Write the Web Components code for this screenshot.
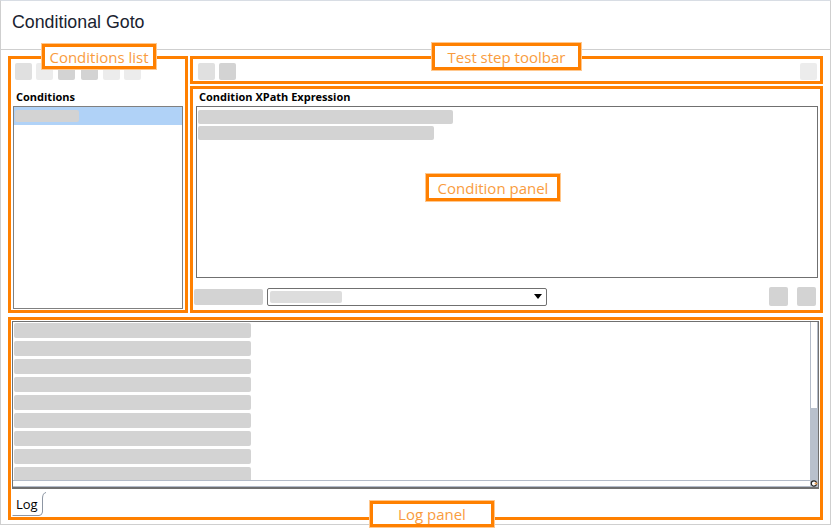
<!DOCTYPE html>
<html>
<head>
<meta charset="utf-8">
<title>Conditional Goto</title>
<style>
  html, body { margin: 0; background: #fff; }
</style>
</head>
<body>
<goto-window>
  <span slot="title">Conditional Goto</span>

  <orange-frame slot="conditions">
    <conditions-list></conditions-list>
  </orange-frame>
  <orange-frame slot="toolbar">
    <step-toolbar></step-toolbar>
  </orange-frame>
  <orange-frame slot="condition">
    <condition-panel></condition-panel>
  </orange-frame>
  <orange-frame slot="log">
    <log-panel></log-panel>
  </orange-frame>

  <call-out slot="notes" style="--x:42px;--y:44px;--w:114px;--h:25px">Conditions list</call-out>
  <call-out slot="notes" style="--x:432px;--y:43px;--w:149px;--h:27px">Test step toolbar</call-out>
  <call-out slot="notes" style="--x:426px;--y:174px;--w:134px;--h:27px">Condition panel</call-out>
  <call-out slot="notes" style="--x:370px;--y:501px;--w:124px;--h:26px">Log panel</call-out>
</goto-window>

<script>
function shadow(host, html) {
  host.attachShadow({ mode: 'open' }).innerHTML = html;
}

// grey square standing in for a hidden toolbar icon
class ToolButton extends HTMLElement {
  connectedCallback() {
    shadow(this, `
      <style>
        :host {
          display: block;
          width: var(--size, 17px);
          height: var(--size, 17px);
          border-radius: 2px;
          background: var(--tone, #d3d3d3);
        }
      </style>`);
  }
}
customElements.define('tool-button', ToolButton);

// redacted text bar
class BlankBar extends HTMLElement {
  connectedCallback() {
    shadow(this, `
      <style>
        :host {
          display: block;
          flex: none;
          width: var(--w, 100px);
          height: var(--h, 14px);
          border-radius: 2px;
          background: var(--tone, #d3d3d3);
        }
      </style>`);
  }
}
customElements.define('blank-bar', BlankBar);

class OrangeFrame extends HTMLElement {
  connectedCallback() {
    shadow(this, `
      <style>
        :host {
          display: block;
          box-sizing: border-box;
          border: 3px solid #ff8000;
          min-width: 0;
          min-height: 0;
        }
      </style>
      <slot></slot>`);
  }
}
customElements.define('orange-frame', OrangeFrame);

class CallOut extends HTMLElement {
  connectedCallback() {
    shadow(this, `
      <style>
        :host {
          position: absolute;
          left: var(--x);
          top: var(--y);
          width: var(--w);
          height: var(--h);
          box-sizing: border-box;
          display: flex;
          align-items: center;
          justify-content: center;
          background: #fff;
          border: 3px solid #ff8000;
          box-shadow: 0 0 0 1px #ffc88f;
          color: #f99c3e;
          font: 15px "Open Sans", sans-serif;
          white-space: nowrap;
        }
      </style>
      <slot></slot>`);
  }
}
customElements.define('call-out', CallOut);

class ConditionsList extends HTMLElement {
  connectedCallback() {
    shadow(this, `
      <style>
        :host {
          display: flex;
          flex-direction: column;
          box-sizing: border-box;
          height: 251px;
          padding: 4px 2px 1px 2px;
        }
        .tools { display: flex; gap: 4px; padding-left: 2px; }
        .tools tool-button:nth-child(3), .tools tool-button:nth-child(5) { margin-left: 1px; }
        .tools tool-button:nth-child(4) { margin-left: 2px; }
        h2 {
          margin: 10px 0 2px 3px;
          font: bold 11px/14px "Open Sans", sans-serif;
          color: #000;
        }
        .list {
          flex: 1;
          border: 1px solid #808080;
          background: #fff;
        }
        .row {
          height: 18px;
          background: #b0d2f7;
          display: flex;
          align-items: center;
          padding-left: 1px;
        }
      </style>
      <div class="tools">
        <tool-button style="--tone:#e0e0e0"></tool-button>
        <tool-button style="--tone:#ececec"></tool-button>
        <tool-button></tool-button>
        <tool-button></tool-button>
        <tool-button style="--tone:#ececec"></tool-button>
        <tool-button style="--tone:#ececec"></tool-button>
      </div>
      <h2>Conditions</h2>
      <div class="list">
        <div class="row"><blank-bar style="--w:64px;--h:12px"></blank-bar></div>
      </div>`);
  }
}
customElements.define('conditions-list', ConditionsList);

class StepToolbar extends HTMLElement {
  connectedCallback() {
    shadow(this, `
      <style>
        :host {
          display: flex;
          align-items: flex-start;
          gap: 4px;
          padding: 4px 3px 0 5px;
        }
        .end { margin-left: auto; }
      </style>
      <tool-button style="--tone:#e0e0e0"></tool-button>
      <tool-button></tool-button>
      <tool-button class="end" style="--tone:#ececec"></tool-button>`);
  }
}
customElements.define('step-toolbar', StepToolbar);

class ConditionPanel extends HTMLElement {
  connectedCallback() {
    shadow(this, `
      <style>
        :host {
          display: flex;
          flex-direction: column;
          box-sizing: border-box;
          height: 221px;
          padding: 0 2px 0 3px;
        }
        h2 {
          margin: 1px 0 2px 3px;
          font: bold 11px/14px "Open Sans", sans-serif;
          color: #000;
        }
        .editor {
          height: 172px;
          box-sizing: border-box;
          border: 1px solid #707070;
          padding: 3px 1px;
          display: flex;
          flex-direction: column;
          gap: 2px;
          background: #fff;
        }
        .foot {
          display: flex;
          align-items: center;
          margin: 9px 0 0 -2px;
        }
        .select {
          width: 280px;
          height: 18px;
          box-sizing: border-box;
          margin-left: 4px;
          border: 1px solid #707070;
          border-radius: 2px;
          display: flex;
          align-items: center;
          padding: 0 4px 0 2px;
        }
        .select svg { margin-left: auto; }
        .acts { margin-left: auto; display: flex; gap: 9px; padding-right: 2px; --size: 19px; }
      </style>
      <h2>Condition XPath Expression</h2>
      <div class="editor">
        <blank-bar style="--w:255px"></blank-bar>
        <blank-bar style="--w:236px"></blank-bar>
      </div>
      <div class="foot">
        <blank-bar style="--w:69px;--h:16px"></blank-bar>
        <div class="select">
          <blank-bar style="--w:72px;--h:12px;--tone:#dddddd"></blank-bar>
          <svg width="8" height="5" viewBox="0 0 8 5"><path d="M0 0h8L4 5z" fill="#000"/></svg>
        </div>
        <div class="acts"><tool-button></tool-button><tool-button></tool-button></div>
      </div>`);
  }
}
customElements.define('condition-panel', ConditionPanel);

class LogPanel extends HTMLElement {
  connectedCallback() {
    const bars = '<blank-bar style="--w:237px;--h:15px"></blank-bar>'.repeat(8);
    shadow(this, `
      <style>
        :host {
          display: block;
          box-sizing: border-box;
          height: 197px;
          padding: 1px 1px 0 1px;
        }
        .view {
          height: 168px;
          box-sizing: border-box;
          border: 1px solid #707070;
          border-bottom-width: 2px;
          display: grid;
          grid-template-columns: 1fr 8px;
          grid-template-rows: 1fr 7px;
        }
        .lines {
          padding: 1px 0 0 1px;
          display: flex;
          flex-direction: column;
          gap: 3px;
          overflow: hidden;
        }
        .lines blank-bar:last-child { height: 13px; border-radius: 2px 2px 0 0; }
        .vbar {
          display: flex;
          flex-direction: column;
          box-sizing: border-box;
          border-left: 1px solid #b4bcc9;
          border-right: 1px solid #b4bcc9;
        }
        .thumb { margin: auto -1px 0; height: 72px; background: #b8c0cc; }
        .hbar {
          box-sizing: border-box;
          border-top: 1px solid #b4bcc9;
          border-bottom: 1px solid #b4bcc9;
        }
        .corner { display: block; }
        .tabs { padding: 3px 0 0 0; }
      </style>
      <div class="view">
        <div class="lines">
          <blank-bar style="--w:237px;--h:15px"></blank-bar>
          ${bars}
        </div>
        <div class="vbar"><div class="thumb"></div></div>
        <div class="hbar"></div>
        <svg class="corner" width="8" height="7" viewBox="0 0 8 7">
          <rect width="8" height="7" fill="#b8c0cc"/>
          <circle cx="4" cy="3.500" r="2.700" fill="#fff" stroke="#222" stroke-width="1.200"/>
          <path d="M4.500 3.500h3M6 2v3" stroke="#e8a460" fill="none"/>
        </svg>
      </div>
      <div class="tabs"><log-tab>Log</log-tab></div>`);
  }
}
customElements.define('log-panel', LogPanel);

class LogTab extends HTMLElement {
  connectedCallback() {
    shadow(this, `
      <style>
        :host {
          display: inline-block;
          position: relative;
          width: 35px;
          height: 24px;
          box-sizing: border-box;
          padding: 4px 0 0 4px;
          font: 13px/16px "Open Sans", sans-serif;
          color: #000;
        }
        svg { position: absolute; left: 0; top: 0; }
      </style>
      <svg width="35" height="24" viewBox="0 0 35 24">
        <path d="M.5 23.500H27Q30 23.500 30.500 20V6Q30.800 1 34 .5" fill="none" stroke="#8d96a3"/>
      </svg>
      <slot></slot>`);
  }
}
customElements.define('log-tab', LogTab);

class GotoWindow extends HTMLElement {
  connectedCallback() {
    shadow(this, `
      <style>
        :host {
          display: block;
          width: 831px;
          height: 525px;
          box-sizing: border-box;
          border: 1px solid #cfcfcf;
          border-top-color: #d8dde4;
          background: #fff;
        }
        header {
          height: 49px;
          box-sizing: border-box;
          border-bottom: 1px solid #cfcfcf;
          padding: 11px 0 0 11px;
          font: 17.8px/20px "Liberation Sans", sans-serif;
          color: #1a2330;
        }
        main {
          display: grid;
          grid-template-columns: 180px 633px;
          grid-template-rows: 28px 229px 207px;
          column-gap: 2px;
          padding: 6px 0 0 7px;
        }
        ::slotted([slot=conditions]) { grid-row: 1 / 3; }
        ::slotted([slot=toolbar]) { grid-column: 2; grid-row: 1; }
        ::slotted([slot=condition]) { grid-column: 2; grid-row: 2; margin-top: 2px; }
        ::slotted([slot=log]) { grid-column: 1 / 3; grid-row: 3; margin-top: 4px; height: 203px; }
      </style>
      <header><slot name="title"></slot></header>
      <main>
        <slot name="conditions"></slot>
        <slot name="toolbar"></slot>
        <slot name="condition"></slot>
        <slot name="log"></slot>
      </main>
      <slot name="notes"></slot>`);
  }
}
customElements.define('goto-window', GotoWindow);
</script>
</body>
</html>
